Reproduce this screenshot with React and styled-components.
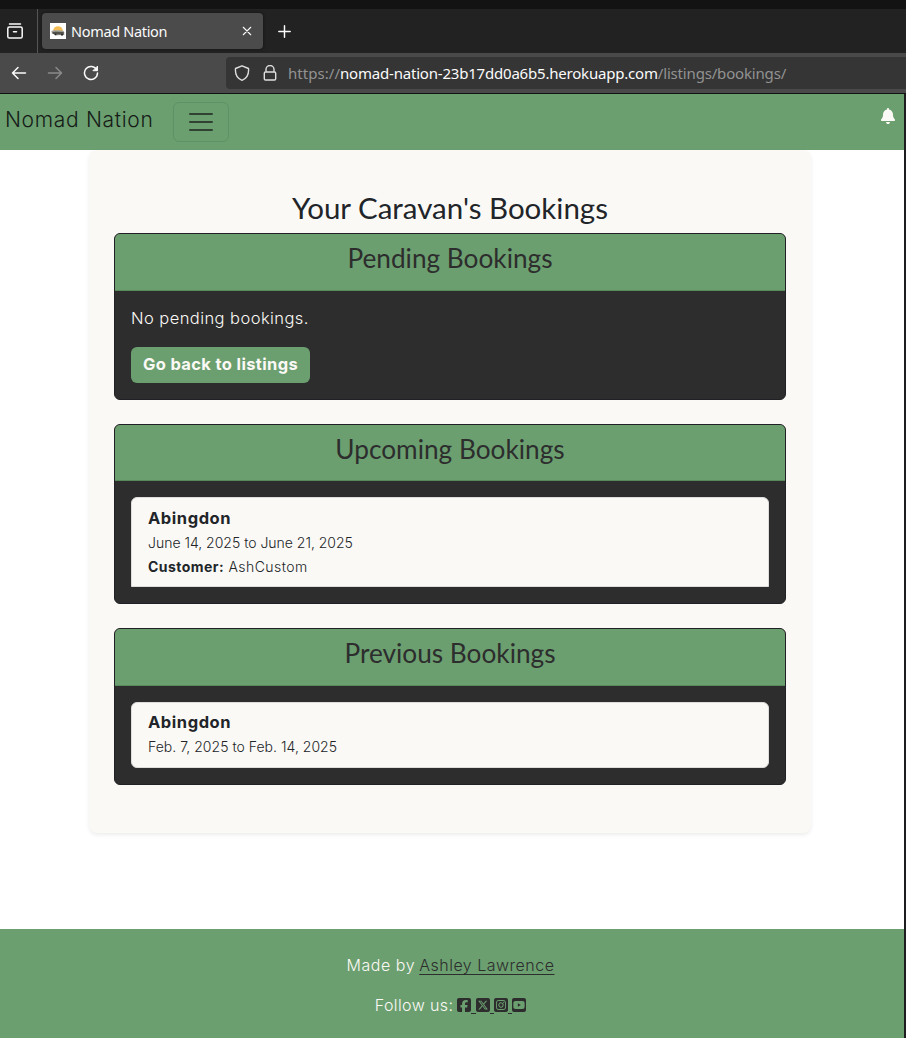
import React from "react";
import styled, { createGlobalStyle } from "styled-components";
import { FaBell, FaSquareFacebook, FaSquareXTwitter, FaSquareInstagram, FaSquareYoutube } from "react-icons/fa6";

const green = "#6b9f70";
const dark = "#2d2d2d";
const cream = "#fbf9f5";

const GlobalStyle = createGlobalStyle`
  * { box-sizing: border-box; }
  body { margin: 0; background: #fff; overflow: hidden; }
  h1, h2, p { margin: 0; }
`;
const Window = styled.div`
  width: 906px;
  height: 1038px;
  display: flex;
  flex-direction: column;
  overflow: hidden;
  color: #212529;
  font: 400 16px/24px Inter, "Liberation Sans", sans-serif;
  white-space: nowrap;
`;
const Text = styled.span`
  letter-spacing: ${(p) => p.$track || 0}px;
`;
const TitleStrip = styled.div`
  flex: 0 0 9px;
  background: #131313;
`;
const TabBar = styled.div`
  flex: 0 0 44px;
  display: flex;
  align-items: center;
  background: #222;
  color: #fbfbfb;
`;
const TabManager = styled.div`
  width: 38px;
  height: 44px;
  padding-left: 7px;
  display: flex;
  align-items: center;
  border-right: 1px solid #555;
`;
const Tab = styled.div`
  width: 221px;
  height: 36px;
  margin-left: 4px;
  padding: 0 11px 0 8px;
  display: flex;
  align-items: center;
  border-radius: 4px;
  background: #4b4b4b;
  box-shadow: 0 0 3px #111;
  font: 14.5px/20px "Noto Sans", sans-serif;
`;
const TabTitle = styled.span`
  flex: 1;
  margin-left: 5px;
  letter-spacing: ${(p) => p.$track}px;
`;
const NewTab = styled.div`
  display: flex;
  margin-left: 15px;
`;
const Toolbar = styled.div`
  flex: 0 0 41px;
  display: flex;
  align-items: center;
  background: #4a4a4a;
  border-bottom: 1px solid #121212;
  color: #fbfbfb;
`;
const NavButtons = styled.div`
  width: 226px;
  padding-left: 11px;
  display: flex;
  gap: 20px;
`;
const Address = styled.div`
  flex: 1;
  height: 32px;
  padding-left: 8px;
  display: flex;
  align-items: center;
  border-radius: 4px 0 0 4px;
  background: #353535;
  font: 15px/20px "Noto Sans", sans-serif;
`;
const AddressIcons = styled.div`
  width: 54px;
  display: flex;
  gap: 12px;
`;
const Url = styled.span`
  color: #929292;
  letter-spacing: ${(p) => p.$track}px;
`;
const Host = styled.span`
  color: #fbfbfb;
  letter-spacing: ${(p) => p.$track}px;
`;
const Viewport = styled.div`
  flex: 1;
  display: flex;
  flex-direction: column;
  background: #fff;
  border-right: 2px solid #1e1e20;
`;
const Navbar = styled.header`
  height: 56px;
  padding: 0 8px 0 5px;
  display: flex;
  align-items: center;
  background: ${green};
  color: #161c17;
`;
const Brand = styled.span`
  width: 168px;
  margin-top: -4px;
  font-size: 21px;
  font-weight: 350;
  letter-spacing: ${(p) => p.$track}px;
`;
const Toggler = styled.div`
  width: 56px;
  height: 40px;
  display: flex;
  align-items: center;
  justify-content: center;
  border: 1px solid #609065;
  border-radius: 6px;
`;
const Notification = styled.div`
  display: flex;
  margin: -12px 0 0 auto;
  color: ${cream};
`;
const Main = styled.main`
  flex: 1;
`;
const Panel = styled.div`
  width: 722px;
  height: 683px;
  margin-left: 89px;
  padding: 41px 25px 0;
  border-radius: 8px;
  background: ${cream};
  box-shadow: 0 2px 4px rgba(0, 0, 0, 0.075);
`;
const PageTitle = styled.h1`
  height: 42px;
  color: #212529;
  text-align: center;
  font: 400 29.5px/33px Lato, sans-serif;
`;
const Section = styled.section`
  height: ${(p) => p.$height}px;
  margin-bottom: 24px;
  border: 1px solid #202124;
  border-radius: 6px;
  overflow: hidden;
  background: ${dark};
`;
const SectionTitle = styled.h2`
  height: ${(p) => p.$height || 57}px;
  padding-top: 8px;
  border-bottom: 1px solid #568a5b;
  background: ${green};
  color: ${dark};
  text-align: center;
  font: 400 26.22px/33px Lato, sans-serif;
`;
const SectionBody = styled.div`
  padding: 16px;
`;
const EmptyNote = styled.p`
  margin-bottom: 16px;
  height: 24px;
  color: ${cream};
  font-weight: 300;
  font-size: 16.5px;
  line-height: 22px;
  letter-spacing: ${(p) => p.$track}px;
`;
const Button = styled.button`
  display: block;
  width: 179px;
  height: 36px;
  padding: 0 0 2px;
  border: 0;
  border-radius: 6px;
  background: ${green};
  color: ${cream};
  font: 700 16.5px/32px Inter, sans-serif;
  letter-spacing: ${(p) => p.$track}px;
`;
const Booking = styled.div`
  height: ${(p) => p.$height}px;
  padding: ${(p) => (p.$open ? 9 : 8)}px 16px 0;
  border: 1px solid #dedddb;
  border-radius: ${(p) => (p.$open ? "6px 6px 0 0" : "6px")};
  background: ${cream};
`;
const Place = styled.p`
  height: 24px;
  font-weight: 700;
  font-size: 16.5px;
  line-height: 23px;
  letter-spacing: ${(p) => p.$track}px;
`;
const Detail = styled.p`
  font-size: 14px;
  line-height: 24px;
  font-weight: 350;
  letter-spacing: ${(p) => p.$track}px;
`;
const Footer = styled.footer`
  height: 109px;
  padding: 24px 3px 0 0;
  display: flex;
  flex-direction: column;
  align-items: center;
  gap: 16px;
  background: ${green};
  color: ${cream};
  font-weight: 300;
`;
const FooterLine = styled.p`
  height: 24px;
  display: flex;
  align-items: center;
`;
const AuthorLink = styled.a`
  margin-left: 4px;
  color: ${dark};
  text-decoration: underline;
  text-underline-offset: 3px;
  text-decoration-thickness: 1px;
  letter-spacing: ${(p) => p.$track}px;
`;
const Socials = styled.span`
  display: flex;
  margin: 2px 0 0 4px;
  color: ${dark};
`;
const SocialLink = styled.a`
  width: ${(p) => (p.$last ? 14 : 18.3)}px;
  height: 18px;
  display: flex;
  align-items: flex-start;
  &:not(:last-child)::after {
    content: "";
    width: 4.3px;
    height: 16px;
    border-bottom: 1px solid ${dark};
  }
  svg { width: 14px; height: 16px; flex: none; }
`;

const Line = ({ size = 16, d, color = "currentColor", width = 1.5, children }) => (
  <svg width={size} height={size} viewBox="0 0 16 16" fill="none" stroke={color} strokeWidth={width} strokeLinecap="round" strokeLinejoin="round">
    <path d={d} />{children}
  </svg>
);
const Favicon = () => (
  <svg width="16" height="16" viewBox="0 0 16 16">
    <path fill="#fff" d="M0 0h16v16H0z" />
    <path d="M3.2 8a4.8 4.8 0 0 1 9.6 0Z" fill="#f5be55" />
    <path fill="#7d7b73" d="M1.5 8 5 7.3l8 .4 1.2 1.3v3L6 12.3 2 10.5z" />
    <path d="m2 8.3 4-.6 7.5.6" stroke="#c9c7bd" fill="none" strokeWidth=".7" />
    <path d="M3 10h10.5" stroke="#292927" fill="none" />
    <circle cx="5.5" cy="11.4" r=".9" fill="#252525" /><circle cx="12" cy="11.7" r="1" fill="#252525" />
  </svg>
);

export default function App() {
  return (
    <Window>
      <GlobalStyle />
      <TitleStrip />
      <TabBar>
        <TabManager>
          <Line d="M2.5 1h11M2.4 4h11.2Q15.2 4 15.2 5.6v7.8q0 1.6-1.6 1.6H2.4Q.8 15 .8 13.4V5.6Q.8 4 2.4 4ZM6.5 8.7h3" />
        </TabManager>
        <Tab>
          <Favicon />
          <TabTitle $track={-0.32}>Nomad Nation</TabTitle>
          <Line size={10} width={1.7} d="M2 2l12 12M14 2 2 14" />
        </Tab>
        <NewTab><Line size={13} width={1.8} d="M8 1v14M1 8h14" /></NewTab>
      </TabBar>
      <Toolbar>
        <NavButtons>
          <Line d="M14.5 8h-13M7 2.5 1.5 8 7 13.5" />
          <Line color="#8a8a8a" d="M1.5 8h13M9 2.5 14.5 8 9 13.5" />
          <Line d="M13.8 5A6.5 6.5 0 1 0 14.5 8"><path d="M14.5 1.5v4.2h-4.2Z" fill="currentColor" strokeWidth="1" /></Line>
        </NavButtons>
        <Address>
          <AddressIcons>
            <Line color="#dedede" width={1.4} d="M8 .8 14.5 3.5C15 9 12.5 13.5 8 15.3 3.5 13.5 1 9 1.5 3.5Z" />
            <Line color="#dedede" width={1.4} d="M4 7V4.5a4 4 0 0 1 8 0V7M3.5 7h9q1.2 0 1.2 1.2v5.6q0 1.2-1.2 1.2h-9q-1.2 0-1.2-1.2V8.2Q2.3 7 3.5 7Z" />
          </AddressIcons>
          <Url $track={0.04}>https://<Host $track={-0.2}>nomad-nation-23b17dd0a6b5.herokuapp.com</Host><Text $track={-0.17}>/listings/bookings/</Text></Url>
        </Address>
      </Toolbar>
      <Viewport>
        <Navbar>
          <Brand $track={0.68}>Nomad Nation</Brand>
          <Toggler>
            <svg width="30" height="30" viewBox="0 0 30 30" stroke="#2f4232" strokeWidth="2" strokeLinecap="round"><path d="M4 7h22M4 15h22M4 23h22" /></svg>
          </Toggler>
          <Notification><FaBell size={16} /></Notification>
        </Navbar>
        <Main>
          <Panel>
            <PageTitle>Your Caravan's Bookings</PageTitle>
            <Section $height={167}>
              <SectionTitle>Pending Bookings</SectionTitle>
              <SectionBody>
                <EmptyNote $track={0.44}>No pending bookings.</EmptyNote>
                <Button $track={0.36}>Go back to listings</Button>
              </SectionBody>
            </Section>
            <Section $height={180}>
              <SectionTitle $height={56}>Upcoming Bookings</SectionTitle>
              <SectionBody>
                <Booking $height={90} $open>
                  <Place $track={0.55}>Abingdon</Place>
                  <Detail $track={-0.01}>June 14, 2025 to June 21, 2025</Detail>
                  <Detail $track={0.45}><b>Customer:</b> AshCustom</Detail>
                </Booking>
              </SectionBody>
            </Section>
            <Section $height={157}>
              <SectionTitle>Previous Bookings</SectionTitle>
              <SectionBody>
                <Booking $height={66}>
                  <Place $track={0.55}>Abingdon</Place>
                  <Detail $track={0.02}>Feb. 7, 2025 to Feb. 14, 2025</Detail>
                </Booking>
              </SectionBody>
            </Section>
          </Panel>
        </Main>
        <Footer>
          <FooterLine><Text $track={0.55}>Made by</Text><AuthorLink $track={0.5}>Ashley Lawrence</AuthorLink></FooterLine>
          <FooterLine>
            <Text $track={0.4}>Follow us:</Text>
            <Socials>
              <SocialLink><FaSquareFacebook /></SocialLink>
              <SocialLink><FaSquareXTwitter /></SocialLink>
              <SocialLink><FaSquareInstagram /></SocialLink>
              <SocialLink $last><FaSquareYoutube /></SocialLink>
            </Socials>
          </FooterLine>
        </Footer>
      </Viewport>
    </Window>
  );
}
